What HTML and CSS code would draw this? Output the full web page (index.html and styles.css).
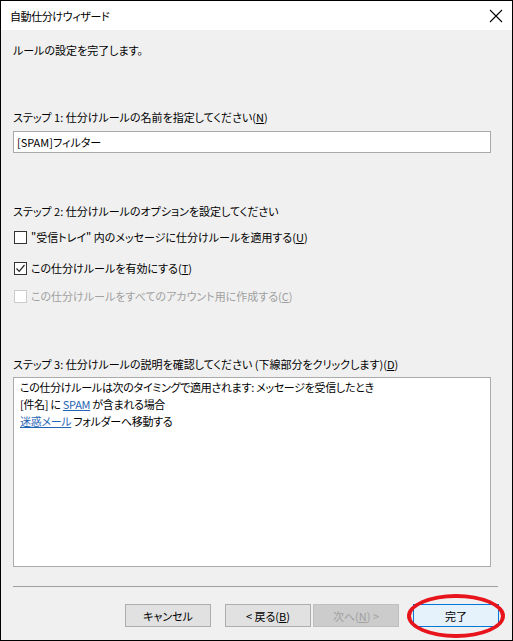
FILE: index.html
```html
<!DOCTYPE html>
<html lang="ja">
<head>
<meta charset="utf-8">
<link rel="stylesheet" href="styles.css">
</head>
<body>
<div class="window">
  <div class="titlebar">
    <span class="title">自動仕分けウィザード</span>
    <svg class="close" width="14" height="14" viewBox="0 0 14 14"><path d="M1 1L13 13M13 1L1 13" stroke="#000" stroke-width="1.1" fill="none"/></svg>
  </div>
  <div class="content">
    <p class="intro">ルールの設定を完了します。</p>
    <p class="step step1">ステップ 1: 仕分けルールの名前を指定してください(<u>N</u>)</p>
    <div class="input">[SPAM]フィルター</div>
    <p class="step step2">ステップ 2: 仕分けルールのオプションを設定してください</p>
    <div class="check c1"><span class="box"></span><span>"受信トレイ" 内のメッセージに仕分けルールを適用する(<u>U</u>)</span></div>
    <div class="check c2"><span class="box"><svg width="11" height="11" viewBox="0 0 11 11"><path d="M1.5 5.5L4.2 8.3L9.5 2" stroke="#222" stroke-width="1.2" fill="none"/></svg></span><span>この仕分けルールを有効にする(<u>T</u>)</span></div>
    <div class="check c3 disabled"><span class="box"></span><span>この仕分けルールをすべてのアカウント用に作成する(<u>C</u>)</span></div>
    <p class="step step3">ステップ 3: 仕分けルールの説明を確認してください (下線部分をクリックします)(<u>D</u>)</p>
    <div class="desc">
      <div>この仕分けルールは次のタイミングで適用されます: メッセージを受信したとき</div>
      <div>[件名] に <a class="link">SPAM</a> が含まれる場合</div>
      <div><a class="link">迷惑メール</a> フォルダーへ移動する</div>
    </div>
    <div class="sep"></div>
    <div class="buttons">
      <button class="btn">キャンセル</button>
      <button class="btn back">&lt; 戻る(<u>B</u>)</button>
      <button class="btn next" disabled>次へ(<u>N</u>) &gt;</button>
      <button class="btn finish">完了</button>
    </div>
  </div>
  <div class="circle"></div>
</div>
</body>
</html>
```
FILE: styles.css
```css
html, body {
  margin: 0;
  padding: 0;
  background: #f0f0f0;
}
body {
  font-family: "Noto Sans CJK JP", "Noto Sans", sans-serif;
  font-size: 11px;
  font-feature-settings: "palt";
  color: #000;
}
.window {
  position: relative;
  width: 513px;
  height: 641px;
  box-sizing: border-box;
  border: 1px solid #000;
  background: #f0f0f0;
  display: flex;
  flex-direction: column;
}
.titlebar {
  height: 29px;
  background: #fff;
  display: flex;
  align-items: center;
  justify-content: space-between;
  padding: 0 9px 0 9px;
}
.title {
  line-height: 16px;
  font-size: 11px;
  letter-spacing: -0.4px;
}
.close {
  display: block;
}
.content {
  flex: 1;
  padding: 0 21px 0 12px;
  display: flex;
  flex-direction: column;
}
p {
  margin: 0;
  line-height: 16px;
}
.intro {
  margin-top: 12px;
}
.step1 {
  margin-top: 51px;
}
.input {
  margin-top: 6px;
  height: 22px;
  box-sizing: border-box;
  border: 1px solid #a9a9a9;
  background: #fff;
  padding: 0 3px;
  line-height: 20px;
}
.step2 {
  margin-top: 50px;
}
.check {
  display: flex;
  align-items: center;
  gap: 4px;
  line-height: 16px;
  padding-left: 1px;
}
.check .box {
  width: 13px;
  height: 13px;
  box-sizing: border-box;
  border: 1px solid #333;
  background: #fff;
  display: flex;
  align-items: center;
  justify-content: center;
}
.c1 { margin-top: 10px; }
.c2 { margin-top: 15px; }
.c3 { margin-top: 12px; }
.disabled { color: #a0a0a0; }
.disabled .box { border-color: #cccccc; }
.step3 {
  margin-top: 52px;
}
.desc {
  margin-top: 5px;
  height: 190px;
  box-sizing: border-box;
  border: 1px solid #ababab;
  background: #fff;
  padding: 1px 6px;
  line-height: 17px;
  letter-spacing: -0.3px;
}
.link {
  text-decoration: underline;
  color: #1f64b5;
}
.sep {
  margin-top: 19px;
  height: 1px;
  background: #a0a0a0;
  margin-right: -7px;
}
.buttons {
  margin-top: 17px;
  display: flex;
  justify-content: flex-end;
  margin-right: -8px;
}
.btn {
  width: 86px;
  height: 23px;
  box-sizing: border-box;
  border: 1px solid #adadad;
  background: #e1e1e1;
  font-family: inherit;
  font-size: 11px;
  font-feature-settings: "palt";
  color: #000;
  padding: 0;
  margin: 0;
}
.back { margin-left: 14px; }
.next {
  margin-left: 2px;
  background: #cccccc;
  border-color: #bfbfbf;
  color: #a0a0a0;
}
.finish {
  margin-left: 14px;
  background: #e5f1fb;
  border-color: #0078d7;
}
.circle {
  position: absolute;
  left: 406px;
  top: 593px;
  width: 98px;
  height: 44px;
  box-sizing: border-box;
  border: 4px solid #e8141c;
  border-radius: 50%;
}
```
